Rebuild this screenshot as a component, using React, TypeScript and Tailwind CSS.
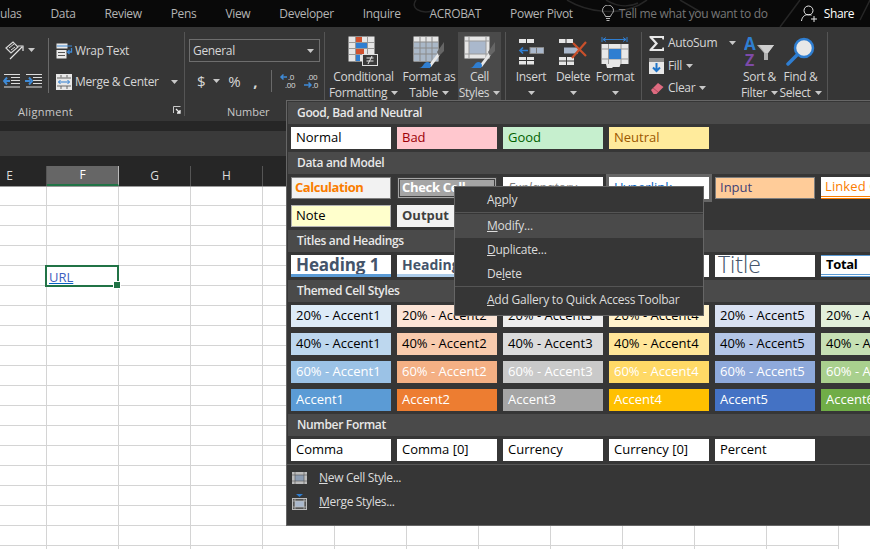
import React from "react";

const F = "font-['Open_Sans','Noto_Sans',sans-serif]";

const Caret = ({ c = "#c8c8c8" }: { c?: string }) => (
  <svg width="7" height="4" viewBox="0 0 7 4" className="shrink-0"><path d="M0 0h7L3.5 4z" fill={c} /></svg>
);

const Tab = ({ t }: { t: string }) => <span className="text-[12px] text-[#b4b4b4] whitespace-nowrap">{t}</span>;

/* ---------- ribbon icons ---------- */
const IconOrient = () => (
  <svg width="22" height="20" viewBox="0 0 22 20" fill="none">
    <path d="M3 8l7-6 5 5-7 6z" stroke="#d8d8d8" strokeWidth="1.2" />
    <path d="M6 8l5-4M8 10l4-3" stroke="#d8d8d8" />
    <path d="M7 19L19 7M15 6h5v5" stroke="#e4e4e4" strokeWidth="1.2" />
  </svg>
);
const IconIndent = ({ flip }: { flip?: boolean }) => (
  <svg width="17" height="14" viewBox="0 0 17 14" fill="none">
    <path d="M1 .5h16M8 3.5h9M8 6.5h9M8 9.5h9M1 13h16" stroke="#dcdcdc" />
    {flip ? <path d="M0 7h5M4 3.5L7 7 4 10.500" stroke="#3f8ad6" strokeWidth="2" /> : <path d="M7 7H2M4 3.500L1 7l3 3.500" stroke="#3f8ad6" strokeWidth="2" />}
  </svg>
);
const IconWrap = () => (
  <svg width="17" height="16" viewBox="0 0 17 16" fill="none">
    <rect x=".5" y=".5" width="11" height="5" fill="#e8e8e8" />
    <path d="M1 3h15" stroke="#3f8ad6" />
    <rect x=".5" y="7" width="10" height="8.500" fill="#e8e8e8" />
    <path d="M2 9.500h7M2 12.500h7" stroke="#555" />
    <path d="M15.500 5v4h-4M13.500 7l-2 2 2 2" stroke="#3f8ad6" strokeWidth="1.300" />
  </svg>
);
const IconMerge = () => (
  <svg width="16" height="16" viewBox="0 0 16 16" fill="none">
    <rect width="16" height="16" fill="#e8e8e8" />
    <path d="M5 1v2.500M11 1v2.500M1 4h14M1 12h14M5 12v3M11 12v3" stroke="#666" />
    <path d="M2.500 8h11M4.500 6L2.500 8l2 2M11.500 6l2 2-2 2" stroke="#2f7ed1" />
  </svg>
);
const IconDecL = () => (
  <svg width="17" height="16" viewBox="0 0 17 16" fill="none">
    <path d="M8 4H2M4.500 1.500L2 4l2.500 2.500" stroke="#3f8ad6" strokeWidth="1.500" />
    <text x="9" y="7" fill="#dcdcdc" fontSize="8">.0</text>
    <text x="6" y="15" fill="#dcdcdc" fontSize="8">.00</text>
  </svg>
);
const IconDecR = () => (
  <svg width="17" height="16" viewBox="0 0 17 16" fill="none">
    <text x="4" y="7" fill="#dcdcdc" fontSize="8">.00</text>
    <path d="M1 12h7M5.500 9.500L8 12l-2.500 2.500" stroke="#3f8ad6" strokeWidth="1.500" />
    <text x="9" y="15" fill="#dcdcdc" fontSize="8">.0</text>
  </svg>
);
const Brush = () => (
  <g>
    <path d="M15 30l10-13 2 2-9 12z" fill="#e8e8e8" />
    <path d="M24 16L31 6v9l-5 5z" fill="#666" />
    <path d="M6 32c4 0 4-5 8-6 3 0 4 2 4 4l-1 2z" fill="#2f7ed1" />
  </g>
);
const IconCond = () => (
  <svg width="31" height="31" viewBox="0 0 31 31">
    <rect x=".5" y=".5" width="26" height="25" fill="#e6e6e6" />
    <path d="M7.500 1v25M19.500 1v25M1 6.500h25M1 12.500h25M1 18.500h25" stroke="#999" />
    <rect x="8" y="1" width="6" height="5" fill="#d0512f" />
    <rect x="8" y="7" width="11" height="5" fill="#2f7ed1" />
    <rect x="8" y="13" width="8" height="5" fill="#d0512f" />
    <rect x="8" y="19" width="4" height="6" fill="#2f7ed1" />
    <rect x="14.500" y="18.500" width="15" height="11" fill="#3a3a3a" stroke="#e0e0e0" />
    <path d="M18.500 22h7M18.500 25h7M24 20l-4 8" stroke="#e8e8e8" />
  </svg>
);
const IconTable = () => (
  <svg width="32" height="32" viewBox="0 0 32 32">
    <rect x=".5" y=".5" width="25" height="25" fill="#e6e6e6" />
    <rect x="1" y="6" width="24" height="19" fill="#aab8c8" />
    <path d="M7 1v24M13 1v24M19 1v24M1 6h24M1 12h24M1 18h24" stroke="#8a8a8a" />
    <Brush />
  </svg>
);
const IconStyles = () => (
  <svg width="32" height="32" viewBox="0 0 32 32">
    <rect x=".5" y=".5" width="25" height="22" fill="#e6e6e6" />
    <rect x="5" y="5" width="17" height="13" fill="#aab8cc" />
    <path d="M5 1v22M22 1v22M1 5h24M1 18h24" stroke="#9a9a9a" />
    <Brush />
  </svg>
);
const IconInsert = () => (
  <svg width="26" height="27" viewBox="0 0 26 27">
    <g fill="#e6e6e6">
      <path d="M1 1h7v4H1zM9 1h7v4H9zM1 19h7v3H1zM9 19h7v3H9zM1 23h7v3.500H1zM9 23h7v3.500H9z" />
    </g>
    <rect x="12" y="9.500" width="14" height="6" fill="#aab8cc" stroke="#888" />
    <path d="M10 12.500H2M5 9.500l-3 3 3 3" stroke="#2f7ed1" strokeWidth="1.700" fill="none" />
    <path d="M18.500 9.500v6" stroke="#777" />
  </svg>
);
const IconDelete = () => (
  <svg width="30" height="27" viewBox="0 0 30 27" fill="none">
    <path d="M1 1h6.500v4H1zM8.500 1H15v4H8.500zM1 19h7v3.500H1zM9 19h7v3.500H9zM1 23.500h7V27H1zM9 23.500h7V27H9z" fill="#e6e6e6" />
    <rect x="6" y="9.500" width="14" height="6" fill="#aab8cc" />
    <path d="M15 5l13 13M28 4L14 20" stroke="#c9502b" strokeWidth="2.200" />
  </svg>
);
const IconFormat = () => (
  <svg width="28" height="32" viewBox="0 0 28 32" fill="none">
    <path d="M1 1v5M26 1v5M2 3.500h23M5 1.500l-3 2 3 2M22 1.500l3 2-3 2" stroke="#2f7ed1" />
    <path d="M.5 8h27v20h-8l-1 3H12l-1 1H6l-1-4H.5z" fill="#e8e8e8" />
    <path d="M7.500 8v20M20 8v20M1 13h26M1 23h26" stroke="#999" />
    <rect x="8" y="13" width="12" height="10" fill="#2f7ed1" />
  </svg>
);
const IconSigma = () => (
  <svg width="15" height="15" viewBox="0 0 15 15"><path d="M.5 0H15v3.500h-1.500L13 2H4l5 5.500L4 13h9l.5-1.500H15V15H.5v-1.500L6 7.500.5 1.500z" fill="#e8e8e8" /></svg>
);
const IconFill = () => (
  <svg width="15" height="16" viewBox="0 0 15 16">
    <rect width="15" height="16" fill="#e8e8e8" />
    <rect width="15" height="4" fill="#8a8a8a" />
    <path d="M7.500 5v8M4 9.500l3.500 3.500L11 9.500" stroke="#1f74c8" strokeWidth="2" fill="none" />
  </svg>
);
const IconEraser = () => (
  <svg width="14" height="13" viewBox="0 0 14 13"><path d="M1 8l7-7 5.500 4-7 7H3.500z" fill="#de6b80" /><path d="M3 6l5 4" stroke="#b34a5e" /></svg>
);
const IconSort = () => (
  <svg width="31" height="31" viewBox="0 0 31 31">
    <text x="0" y="14" fill="#2f7ed1" fontSize="17" fontWeight="700">A</text>
    <text x="1" y="30" fill="#7d4aa8" fontSize="16" fontWeight="700">Z</text>
    <path d="M13 9h17l-6 8v7h-4v-7z" fill="#b0b0b0" />
    <path d="M15 9h15l-6 8h-3z" fill="#cfcfcf" />
  </svg>
);
const IconFind = () => (
  <svg width="30" height="30" viewBox="0 0 30 30" fill="none">
    <circle cx="18" cy="11" r="9" fill="#e8e8e8" stroke="#2f7ed1" strokeWidth="2.500" />
    <path d="M11 18L2 27" stroke="#2f7ed1" strokeWidth="3.500" strokeLinecap="round" />
  </svg>
);

const Big = ({ w, icon, a, b, bg }: { w: string; icon: React.ReactNode; a: string; b?: string; bg?: string }) => (
  <div className={`${w} ${bg ?? ""} h-[69px] flex flex-col items-center shrink-0 text-[12px] leading-[16px] text-[#d6d6d6] whitespace-nowrap`}>
    <div className="h-[38px] flex items-center justify-center pt-[2px]">{icon}</div>
    <div>{a}</div>
    <div className="flex items-center gap-[4px] h-[16px]">
      {b && <span>{b}</span>}
      <Caret />
    </div>
  </div>
);

/* ---------- gallery ---------- */
const base = "w-[100px] h-[22px] shrink-0 flex items-center pl-[5px] text-[13px] tracking-normal whitespace-nowrap overflow-hidden";
const Tile = ({ c, children }: { c: string; children?: React.ReactNode }) => <div className={`${base} ${c}`}>{children}</div>;
const Head = ({ t }: { t: string }) => (
  <div className="ml-[1px] h-[22px] bg-[#4a4a4a] flex items-center pl-[9px] text-[12px] font-semibold text-[#e8e8e8] whitespace-nowrap">{t}</div>
);
const Row = ({ children, mb = "mb-[3px]" }: { children: React.ReactNode; mb?: string }) => (
  <div className={`flex gap-[6px] pl-[4px] mt-[3px] ${mb}`}>{children}</div>
);
const themed: [string, string[]][] = [
  ["20% - Accent", ["bg-[#ddebf7] text-black", "bg-[#fce4d6] text-black", "bg-[#ededed] text-black", "bg-[#fff2cc] text-black", "bg-[#d9e1f2] text-black", "bg-[#e2efda] text-black"]],
  ["40% - Accent", ["bg-[#bdd7ee] text-black", "bg-[#f8cbad] text-black", "bg-[#dbdbdb] text-black", "bg-[#ffe699] text-black", "bg-[#b4c6e7] text-black", "bg-[#c6e0b4] text-black"]],
  ["60% - Accent", ["bg-[#9bc2e6] text-white", "bg-[#f4b084] text-white", "bg-[#c9c9c9] text-white", "bg-[#ffd966] text-white", "bg-[#8ea9db] text-white", "bg-[#a9d08e] text-white"]],
  ["Accent", ["bg-[#5b9bd5] text-white", "bg-[#ed7d31] text-white", "bg-[#a5a5a5] text-white", "bg-[#ffc000] text-white", "bg-[#4472c4] text-white", "bg-[#70ad47] text-white"]],
];

const columns = ["E", "F", "G", "H", "I", "J", "K", "L", "M", "N", "O", "P"];

const MenuItem = ({ children, active }: { children: React.ReactNode; active?: boolean }) => (
  <div className={`h-[24px] flex items-center pl-[32px] text-[12px] text-[#dcdcdc] tracking-[-0.23px] whitespace-nowrap ${active ? "bg-[#4a4a4a]" : ""}`}>{children}</div>
);

export default function App() {
  return (
    <div className={`${F} relative w-[870px] h-[549px] overflow-hidden bg-white tracking-[-0.33px]`}>
      {/* title tabs */}
      <div className="relative h-[27px] bg-[#090909] flex items-center overflow-hidden">
        <svg className="absolute left-[380px] top-0" width="490" height="27" fill="none" stroke="#262626" strokeWidth="1.500">
          <path d="M36 0c-6 8 4 14 16 11M187 0c20 12 50 16 72 5l8-5M226 0c10 6 22 8 32 3M400 27L420 0M480 20l10-20M300 0l24 14" />
        </svg>
        <div className="relative flex items-center gap-[29px] shrink-0">
          <Tab t="ulas" /><Tab t="Data" /><Tab t="Review" /><Tab t="Pens" /><Tab t="View" /><Tab t="Developer" /><Tab t="Inquire" /><Tab t="ACROBAT" /><Tab t="Power Pivot" />
        </div>
        <svg className="relative ml-[29px] shrink-0" width="12" height="17" viewBox="0 0 12 17" fill="none" stroke="#b4b4b4">
          <path d="M3.500 11.500C3 9 .5 8 .5 5.500a5.500 5.500 0 0 1 11 0C11.500 8 9 9 8.500 11.500zM4 13.500h4M4.500 15.500h3" />
        </svg>
        <span className="relative ml-[5px] text-[12px] text-[#777] whitespace-nowrap">Tell me what you want to do</span>
        <svg className="relative ml-[33px] shrink-0" width="17" height="17" viewBox="0 0 17 17" fill="none" stroke="#e8e8e8">
          <circle cx="7.500" cy="5.500" r="4.500" />
          <path d="M.5 16c.5-4 3-6.500 7-6.500 1 0 2 .2 3 .7M13 11v6M10 14h6" />
        </svg>
        <span className="relative ml-[6px] text-[12px] text-white whitespace-nowrap">Share</span>
      </div>

      {/* ribbon */}
      <div className="h-[94px] bg-[#363636] flex items-start pt-[5px]">
        {/* alignment */}
        <div className="w-[185px] h-[84px] shrink-0 border-r border-[#555] flex flex-col">
          <div className="h-[72px] shrink-0 flex">
            <div className="w-[49px] mt-[6px] h-[55px] border-r border-[#6a6a6a] flex flex-col pl-[3px]">
              <div className="h-[24px] shrink-0 flex items-center gap-[3px]"><IconOrient /><Caret /></div>
              <div className="h-[24px] shrink-0 mt-[7px] flex items-center gap-[5px]"><IconIndent /><IconIndent flip /></div>
            </div>
            <div className="mt-[7px] pl-[7px] text-[12px] text-[#d6d6d6] whitespace-nowrap">
              <div className="h-[24px] flex items-center gap-[2px]"><IconWrap /><span>Wrap Text</span></div>
              <div className="h-[24px] mt-[7px] flex items-center gap-[3px]"><IconMerge /><span>Merge &amp; Center</span><span className="ml-[9px]"><Caret /></span></div>
            </div>
          </div>
          <div className="relative h-[16px] pl-[18px] flex items-center text-[11px] text-[#c8c8c8] tracking-[.3px]">
            Alignment
            <svg className="absolute left-[173px] top-[2px]" width="8" height="8" viewBox="0 0 8 8" fill="none">
              <path d="M.5 7V.5H7.500" stroke="#c8c8c8" /><path d="M3 3l4 4M7 4v3H4" stroke="#f0f0f0" strokeWidth="1.300" />
            </svg>
          </div>
        </div>
        {/* number */}
        <div className="w-[140px] h-[84px] shrink-0 border-r border-[#555] flex flex-col pl-[4px] pr-[4px]">
          <div className="mt-[7px] shrink-0 w-[131px] h-[23px] border border-[#6e6e6e] flex items-center justify-between pl-[3px] pr-[5px] text-[12px] text-[#d6d6d6]">General<Caret /></div>
          <div className="mt-[7px] shrink-0 h-[24px] flex items-center text-[#d6d6d6]">
            <span className="ml-[8px] text-[15px]">$</span>
            <span className="ml-[8px]"><Caret /></span>
            <span className="ml-[8px] text-[15px]">%</span>
            <span className="ml-[13px] text-[15px] font-bold">,</span>
            <span className="ml-[14px] h-[22px] border-l border-[#6a6a6a]" />
            <span className="ml-[7px] flex"><IconDecL /></span>
            <span className="ml-[7px] flex"><IconDecR /></span>
          </div>
          <div className="mt-[11px] shrink-0 pl-[38px] leading-[16px] text-[11px] text-[#c8c8c8] tracking-normal">Number</div>
        </div>
        {/* styles */}
        <div className="w-[181px] h-[69px] shrink-0 border-r border-[#555] flex pl-[6px]">
          <Big w="w-[65px]" icon={<IconCond />} a="Conditional" b="Formatting" />
          <Big w="w-[66px]" icon={<IconTable />} a="Format as" b="Table" />
          <Big w="w-[43px] -ml-[4px]" bg="bg-[#4a4a4a]" icon={<IconStyles />} a="Cell" b="Styles" />
        </div>
        {/* cells */}
        <div className="w-[136px] h-[69px] shrink-0 border-r border-[#555] flex pl-[4px]">
          <Big w="w-[42px]" icon={<IconInsert />} a="Insert" />
          <Big w="w-[42px]" icon={<IconDelete />} a="Delete" />
          <Big w="w-[42px]" icon={<IconFormat />} a="Format" />
        </div>
        {/* editing */}
        <div className="w-[186px] h-[69px] shrink-0 border-r border-[#555] flex text-[12px] text-[#d6d6d6] whitespace-nowrap">
          <div className="w-[98px] pl-[7px]">
            <div className="h-[22.5px] flex items-center gap-[4px]"><IconSigma /><span>AutoSum</span><span className="ml-[8px]"><Caret /></span></div>
            <div className="h-[22.5px] flex items-center gap-[4px]"><IconFill /><span>Fill</span><Caret /></div>
            <div className="h-[22.5px] flex items-center gap-[4px] pl-[1px]"><IconEraser /><span>Clear</span><Caret /></div>
          </div>
          <Big w="w-[43px] -ml-[2px]" icon={<IconSort />} a="Sort &" b="Filter" />
          <Big w="w-[41px] -ml-[1px]" icon={<IconFind />} a="Find &" b="Select" />
        </div>
      </div>

      {/* formula band */}
      <div className="h-[45px] bg-[#262626] pt-[10px]">
        <div className="h-[25px] bg-[#3a3a3a]" />
      </div>

      {/* sheet */}
      <div className="relative z-[1] flex h-[20px] bg-[#262626] shadow-[0_1px_0_#9a9a9a]">
        {columns.map((c, i) => (
          <div key={c} className={`shrink-0 h-[20px] flex items-center justify-center text-[12px] tracking-normal border-r ${i === 0 ? "w-[47px] border-[#555] pr-[27px]" : "w-[72px] border-[#555]"} ${c === "F" ? "bg-[#666] text-white border-[#bbb] border-b-2 border-b-[#217346]" : "text-[#dcdcdc]"}`}>{c}</div>
        ))}
      </div>
      {Array.from({ length: 19 }).map((_, r) => (
        <div key={r} className="flex h-[20px]">
          {columns.map((c, i) => (
            <div key={c} className={`relative shrink-0 h-[20px] border-r border-b border-[#d4d4d4] ${i === 0 ? "w-[47px]" : "w-[72px]"}`}>
              {r === 4 && c === "F" && (
                <div className="absolute left-[-2px] top-[-1px] w-[74px] h-[22px] border-2 border-[#217346] bg-white z-10 pl-[2px] text-[13px] tracking-normal leading-[20px] text-[#3f5fc0] underline decoration-[#0563c1]">
                  URL
                  <div className="absolute right-[-4px] bottom-[-4px] w-[6px] h-[6px] bg-[#217346] border border-white box-content" />
                </div>
              )}
            </div>
          ))}
        </div>
      ))}

      {/* cell styles gallery */}
      <div className="absolute left-[286px] top-[100px] w-[600px] h-[426px] bg-[#363636] border border-[#666] pt-[1px] z-20">
        <Head t="Good, Bad and Neutral" />
        <Row>
          <Tile c="bg-white text-black">Normal</Tile>
          <Tile c="bg-[#ffc7ce] text-[#9c0006]">Bad</Tile>
          <Tile c="bg-[#c6efce] text-[#006100]">Good</Tile>
          <Tile c="bg-[#ffeb9c] text-[#9c5700]">Neutral</Tile>
        </Row>
        <Head t="Data and Model" />
        <Row mb="mb-[6px]">
          <Tile c="bg-[#f2f2f2] border border-[#7f7f7f] text-[#fa7d00] font-bold !tracking-[-0.45px] !pl-[3px]">Calculation</Tile>
          <Tile c="bg-[#a5a5a5] border-[3px] border-double border-[#3f3f3f] text-white font-bold !tracking-[-0.3px] !pl-[2px]">Check Cell</Tile>
          <Tile c="bg-white text-[#7f7f7f] italic">Explanatory</Tile>
          <Tile c="bg-white text-[#0563c1] underline ring-[3px] ring-[#666]">Hyperlink</Tile>
          <Tile c="bg-[#ffcc99] border border-[#7f7f7f] text-[#3f3f76] !pl-[4px]">Input</Tile>
          <Tile c="bg-white text-[#fa7d00] border-b-[3px] border-double border-[#fa7d00] !pl-[4px] !tracking-[.1px]">Linked Cell</Tile>
        </Row>
        <Row>
          <Tile c="bg-[#ffffcc] border border-[#b2b2b2] text-black !pl-[4px]">Note</Tile>
          <Tile c="bg-[#f2f2f2] text-[#3f3f3f] font-bold">Output</Tile>
        </Row>
        <Head t="Titles and Headings" />
        <Row>
          <Tile c="bg-white text-[#44546a] font-bold !text-[17px] !tracking-[-0.1px] border-b-[3px] border-[#5b9bd5]">Heading 1</Tile>
          <Tile c="bg-white text-[#44546a] font-bold !text-[14px] border-b-[3px] border-[#acccea]">Heading 2</Tile>
          <Tile c="bg-white text-[#44546a] font-bold">Heading 3</Tile>
          <Tile c="bg-white text-[#44546a] font-bold">Heading 4</Tile>
          <Tile c="bg-white text-[#44546a] !text-[23px] font-light !pl-[3px] leading-[18px] items-start">Title</Tile>
          <Tile c="bg-white text-black font-bold !tracking-[-0.3px] border-t border-t-[#5b9bd5] border-b-[3px] border-double border-b-[#5b9bd5]">Total</Tile>
        </Row>
        <Head t="Themed Cell Styles" />
        <div className="flex flex-col gap-[6px] mt-[3px] mb-[3px]">
          {themed.map(([label, cs]) => (
            <div key={label} className="flex gap-[6px] pl-[4px]">
              {cs.map((c, i) => <Tile key={c} c={c}>{label}{i + 1}</Tile>)}
            </div>
          ))}
        </div>
        <Head t="Number Format" />
        <Row>
          <Tile c="bg-white text-black">Comma</Tile>
          <Tile c="bg-white text-black">Comma [0]</Tile>
          <Tile c="bg-white text-black">Currency</Tile>
          <Tile c="bg-white text-black">Currency [0]</Tile>
          <Tile c="bg-white text-black">Percent</Tile>
        </Row>
        <div className="border-t border-[#555] mt-[2px] pt-[1px] text-[12px] text-[#dcdcdc]">
          <div className="h-[24px] flex items-center pl-[5px] gap-[12px]">
            <svg width="15" height="12" viewBox="0 0 15 12"><rect width="15" height="12" fill="#bdbdbd" /><rect x="3" y="3" width="9" height="6" fill="#8d9db2" /><path d="M3 0v12M12 0v12M0 3h15M0 9h15" stroke="#555" strokeWidth=".6" /></svg>
            <span><u>N</u>ew Cell Style...</span>
          </div>
          <div className="h-[24px] flex items-center pl-[5px] gap-[12px]">
            <svg width="15" height="16" viewBox="0 0 15 16"><path d="M4 0h7L7.500 3z" fill="#2f7ed1" /><rect x=".5" y="4.500" width="14" height="11" fill="#555" stroke="#bdbdbd" /><rect x="3" y="7" width="9" height="6" fill="#aab8cc" /><path d="M3 5v10M12 5v10M1 7h13M1 13h13" stroke="#bdbdbd" strokeWidth=".7" /></svg>
            <span><u>M</u>erge Styles...</span>
          </div>
        </div>
      </div>

      {/* context menu */}
      <div className="absolute left-[454px] top-[186px] w-[250px] h-[130px] bg-[#363636] border border-[#666] pt-[1px] z-30">
        <MenuItem>A<u>p</u>ply</MenuItem>
        <div className="mb-[1px] border-t border-[#555]" />
        <MenuItem active><u>M</u>odify...</MenuItem>
        <MenuItem><u>D</u>uplicate...</MenuItem>
        <MenuItem>De<u>l</u>ete</MenuItem>
        <div className="mb-[1px] border-t border-[#555]" />
        <MenuItem><u>A</u>dd Gallery to Quick Access Toolbar</MenuItem>
      </div>
    </div>
  );
}
